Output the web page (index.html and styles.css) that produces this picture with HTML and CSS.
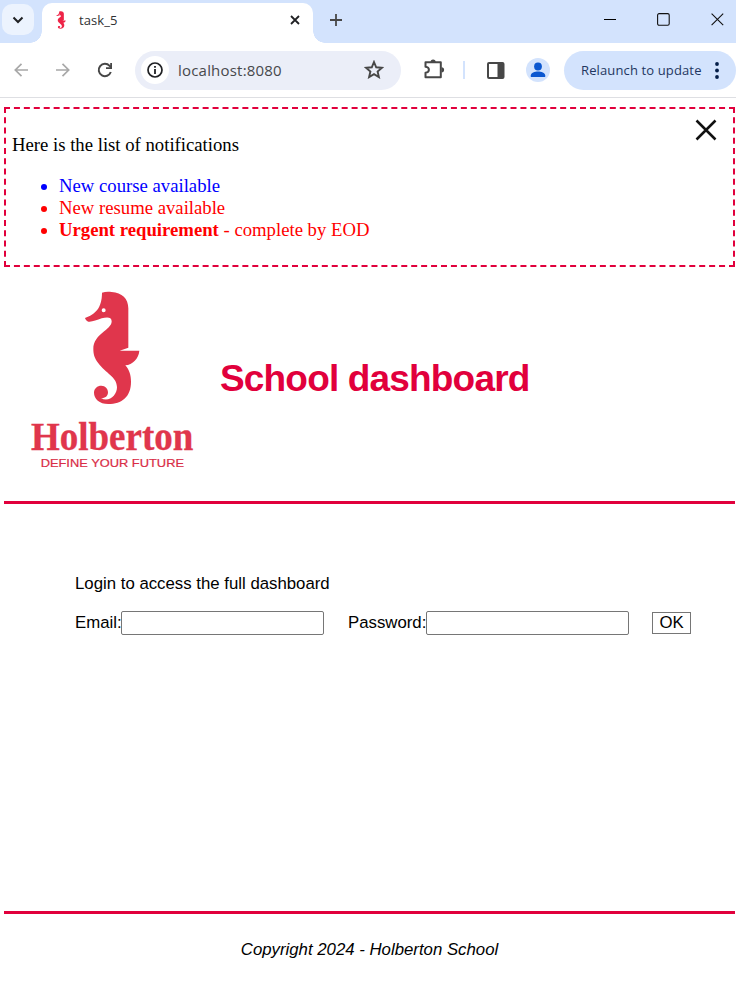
FILE: index.html
```html
<!DOCTYPE html>
<html lang="en">
<head>
<meta charset="utf-8">
<title>task_5</title>
<link rel="stylesheet" href="styles.css">
</head>
<body>
<div class="tabstrip">
  <div class="tab-search"><svg width="12" height="8" viewBox="0 0 12 8"><path d="M1.500 1.500 6 6l4.500-4.500" fill="none" stroke="#202124" stroke-width="2"/></svg></div>
  <div class="tab">
    <svg class="favicon" width="10" height="18" viewBox="190 30 172 346" preserveAspectRatio="none"><use href="#seahorse" fill="#ee2447"/></svg>
    <span class="tab-title">task_5</span>
    <svg class="tab-close" width="10" height="10" viewBox="0 0 10 10"><path d="m1 1 8 8M9 1 1 9" stroke="#202124" stroke-width="1.800"/></svg>
  </div>
  <svg class="new-tab" width="12" height="12" viewBox="0 0 12 12"><path d="M6 0v12M0 6h12" stroke="#474747" stroke-width="1.800"/></svg>
  <div class="window-controls">
    <svg width="12" height="12" viewBox="0 0 12 12"><path d="M0 6.500h12" stroke="#000"/></svg>
    <svg width="13" height="13" viewBox="0 0 13 13"><rect x=".6" y=".6" width="11.600" height="11.600" rx="1.500" fill="none" stroke="#111" stroke-width="1.100"/></svg>
    <svg width="13" height="13" viewBox="0 0 13 13"><path d="m.6.6 11.600 11.600M12.200.6.6 12.200" stroke="#111" stroke-width="1.100"/></svg>
  </div>
</div>
<div class="toolbar">
  <svg class="back" width="14" height="14" viewBox="0 0 14 14"><path d="M14 7H1.500M7.500.8 1.300 7l6.200 6.200" fill="none" stroke="#a8a8a8" stroke-width="1.700"/></svg>
  <svg class="forward" width="14" height="14" viewBox="0 0 14 14"><path d="M0 7h12.500M6.500.8 12.700 7l-6.200 6.200" fill="none" stroke="#a8a8a8" stroke-width="1.700"/></svg>
  <svg class="reload" width="16" height="16" viewBox="0 0 16 16"><path d="M13.800 10A6.200 6.200 0 1 1 12.600 3.800L14 5.200" fill="none" stroke="#474747" stroke-width="2"/><path d="M15 1v6H9V5.200h4.200V1z" fill="#474747"/></svg>
  <div class="address">
    <span class="info"><svg width="16" height="16" viewBox="0 0 16 16"><circle cx="8" cy="8" r="7" fill="none" stroke="#202124" stroke-width="1.700"/><path d="M8 7v5M8 4v1.800" stroke="#202124" stroke-width="1.800"/></svg></span>
    <span class="url">localhost:8080</span>
    <svg class="star" width="20" height="19" viewBox="0 0 20 19"><path d="m10 2 2.200 5.300 5.700.5-4.300 3.700 1.300 5.600-4.900-3-4.900 3 1.300-5.600-4.300-3.700 5.700-.5z" fill="none" stroke="#474747" stroke-width="1.900"/></svg>
  </div>
  <svg class="puzzle" width="21" height="20" viewBox="0 0 21 20"><path d="M1.500 3.300h15.300v15H1.500v-4.500c2.500-.2 3.400-1.600 3.400-3s-.9-2.800-3.400-3z" fill="none" stroke="#474747" stroke-width="2" stroke-linejoin="round"/><path d="M6.500 3a2.600 2.500 0 0 1 5.200 0zM17.500 8.200a2.600 2.600 0 0 1 0 5.200z" fill="#474747"/></svg>
  <span class="divider"></span>
  <svg class="panel" width="18" height="17" viewBox="0 0 18 17"><rect x="1" y="1" width="15.500" height="15" rx="1" fill="none" stroke="#474747" stroke-width="2"/><path d="M10.500 1H16v15h-5.500z" fill="#474747"/></svg>
  <svg class="avatar" width="24" height="24" viewBox="0 0 24 24"><circle cx="12" cy="12" r="12" fill="#d3e3fd"/><circle cx="12" cy="8.500" r="3.900" fill="#0b57d0"/><path d="M4.800 19v-1.700c0-2.600 4-3.900 7.200-3.900s7.200 1.300 7.200 3.900V19z" fill="#0b57d0"/></svg>
  <div class="relaunch"><span>Relaunch to update</span><svg width="4" height="17" viewBox="0 0 4 17"><g fill="#041e49"><circle cx="2" cy="2" r="1.900"/><circle cx="2" cy="8.500" r="1.900"/><circle cx="2" cy="15" r="1.900"/></g></svg></div>
</div>
<main class="page">
  <section class="notifications">
    <svg class="dismiss" width="22" height="22" viewBox="0 0 22 22"><path d="m1.500 1.500 19 19M20.500 1.500l-19 19" stroke="#111" stroke-width="2.500"/></svg>
    <p>Here is the list of notifications</p>
    <ul>
      <li class="default">New course available</li>
      <li class="urgent">New resume available</li>
      <li class="urgent"><strong>Urgent requirement</strong> - complete by EOD</li>
    </ul>
  </section>
  <header class="header">
    <svg class="logo" width="190" height="200" viewBox="0 0 570 600">
      <defs>
        <path id="seahorse" fill-rule="evenodd" d="M246 38C255 35 265 35 275 36C306 38 325 56 325 85V203L299 212H358C356 236 338 254 316 256C328 270 333 285 333 305C333 350 306 372 265 372C238 372 222 356 222 338C222 325 232 317 244 317C256 317 264 326 264 337C264 348 256 355 243 355C268 368 291 345 291 322C291 290 258 281 234 248C223 234 220 222 220 207C220 161 275 151 275 124C275 110 260 111 245 115C230 120 215 127 205 125C199 123 196 118 195 114C225 103 246 85 246 38ZM245 91a6 6 0 1 0 12 0a6 6 0 1 0-12 0Z"/>
      </defs>
      <use href="#seahorse" fill="#e0364c"/>
      <text class="wordmark" x="33" y="509" textLength="487" lengthAdjust="spacingAndGlyphs">Holberton</text>
      <text class="tagline" x="62" y="560" textLength="430" lengthAdjust="spacingAndGlyphs">DEFINE YOUR FUTURE</text>
    </svg>
    <h1>School dashboard</h1>
  </header>
  <section class="login">
    <p>Login to access the full dashboard</p>
    <form class="fields">
      <label for="email">Email:</label><input id="email" type="email">
      <label class="second" for="password">Password:</label><input id="password" type="password">
      <button type="button">OK</button>
    </form>
  </section>
  <footer class="footer">Copyright 2024 - Holberton School</footer>
</main>
</body>
</html>
```
FILE: styles.css
```css
* { box-sizing: border-box; }
body { margin: 0; background: #fff; color: #000; overflow: hidden; }
svg { display: block; flex: none; }

.tabstrip {
  display: flex;
  height: 43px;
  background: #d3e3fd;
  font-family: "Open Sans", "Noto Sans", sans-serif;
}
.tab-search {
  display: flex;
  align-items: center;
  justify-content: center;
  width: 32px;
  height: 31px;
  margin: 4px 8px 0 2px;
  border-radius: 10px;
  background: #ecf3fe;
}
.tab {
  position: relative;
  display: flex;
  align-items: center;
  width: 271px;
  height: 40px;
  margin-top: 3px;
  padding: 0 13px 6px 14px;
  border-radius: 10px 10px 0 0;
  background: #fff;
}
.tab::before, .tab::after {
  content: "";
  position: absolute;
  bottom: 0;
  width: 12px;
  height: 12px;
}
.tab::before { left: -12px; background: radial-gradient(circle at 0 0, transparent 11.5px, #fff 12px); }
.tab::after { right: -12px; background: radial-gradient(circle at 100% 0, transparent 11.5px, #fff 12px); }
.tab-title { margin-left: 13px; color: #303134; font-size: 13px; letter-spacing: .1px; }
.tab-close { margin-left: auto; }
.new-tab { margin: 14px 0 0 17px; }
.window-controls { display: flex; gap: 41px; margin: 13px 12px 0 auto; }

.toolbar {
  display: flex;
  align-items: center;
  height: 55px;
  border-bottom: 1px solid #dedfe3;
  font-family: "Open Sans", "Noto Sans", sans-serif;
}
.back { margin-left: 14px; }
.forward { margin-left: 28px; }
.reload { margin-left: 27px; }
.address {
  display: flex;
  align-items: center;
  width: 266px;
  height: 39px;
  margin-left: 22px;
  padding: 0 17px 0 6px;
  border-radius: 20px;
  background: #ebeef8;
}
.info {
  display: flex;
  align-items: center;
  justify-content: center;
  width: 28px;
  height: 28px;
  border-radius: 50%;
  background: #fff;
}
.url { margin-left: 9px; color: #47484b; font-size: 15px; letter-spacing: .2px; white-space: nowrap; }
.star { margin: 0 0 2px auto; }
.puzzle { margin: 0 0 2px 23px; }
.divider { width: 2px; height: 18px; margin-left: 18px; background: #d3e3fd; }
.panel { margin-left: 22px; }
.avatar { margin-left: 21px; }
.relaunch {
  display: flex;
  align-items: center;
  justify-content: space-between;
  width: 172px;
  height: 39px;
  margin-left: 14px;
  padding: 0 17px;
  border-radius: 20px;
  background: #d3e3fd;
  color: #1f3761;
  font-size: 13px;
  letter-spacing: .13px;
  white-space: nowrap;
}

.page {
  padding: 9px 1px 0 4px;
  font-family: "Liberation Sans", Arial, sans-serif;
  font-size: 16.8px;
}
.notifications {
  position: relative;
  height: 160px;
  padding: 25px 6px 0;
  border: 2px dashed #e1003c;
  font: 18.72px/22px "Liberation Serif", "Times New Roman", serif;
}
.notifications p { margin: 0 0 19px; }
.notifications ul { margin: 0; padding-left: 47px; }
.dismiss { position: absolute; top: 10px; right: 16px; }
.default { color: blue; }
.urgent { color: red; }

.header {
  display: flex;
  height: 237px;
  padding: 13px 0 0 16px;
  border-bottom: 3px solid #e1003c;
}
.wordmark { font: bold 117px "Liberation Serif", serif; fill: #e0364c; stroke: #e0364c; stroke-width: 1px; }
.tagline { font: 34px "Liberation Sans", sans-serif; fill: #d92d46; stroke: #d92d46; stroke-width: .6px; }
.header h1 { margin: 77px 0 0 10px; color: #e1003c; font-size: 37px; letter-spacing: -.83px; line-height: 44px; white-space: nowrap; }

.login { height: 407px; padding: 70px 0 0 71px; }
.login p { margin: 0 0 16px; line-height: 20px; }
.fields { display: flex; align-items: center; height: 25px; }
.fields label:first-child { width: 46px; white-space: nowrap; }
.fields input {
  width: 203px;
  height: 24px;
  padding: 1px 2px;
  border: 1px solid #767676;
  border-radius: 2px;
  background: #fff;
}
.fields .second { width: 78px; margin-left: 24px; white-space: nowrap; }
.fields button {
  width: 39px;
  height: 22px;
  margin-left: 23px;
  padding: 0;
  border: 1px solid #767676;
  background: #fff;
  color: #000;
  font: inherit;
  line-height: 19px;
}
.footer {
  padding-top: 26px;
  border-top: 3px solid #e1003c;
  font-style: italic;
  line-height: 20px;
  text-align: center;
}
```
